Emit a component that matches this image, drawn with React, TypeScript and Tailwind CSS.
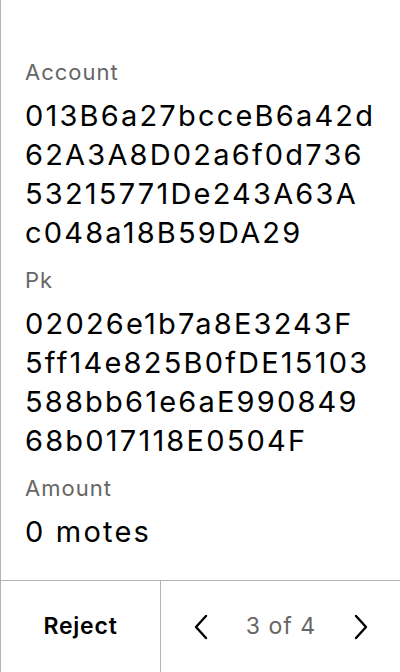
import React from "react";

function Chevron({ dir }: { dir: "left" | "right" }) {
  return (
    <svg width="16" height="26" viewBox="0 0 16 26" fill="none">
      {dir === "left" ? (
        <path d="M13 2 L3 13 L13 24" stroke="#000" strokeWidth="2.4" strokeLinecap="round" strokeLinejoin="round" />
      ) : (
        <path d="M3 2 L13 13 L3 24" stroke="#000" strokeWidth="2.4" strokeLinecap="round" strokeLinejoin="round" />
      )}
    </svg>
  );
}

export default function App() {
  const font = { fontFamily: "Inter, 'Noto Sans', sans-serif" };
  const label = "text-[22px] leading-[24px] tracking-[1px] text-[#666666]";
  const value = "mt-[12px] text-[29px] leading-[39px] tracking-[2.2px] text-black";
  return (
    <div className="h-[672px] w-[400px] flex flex-col bg-white border-l border-[#b3b3b3]" style={font}>
      <div className="flex-1 pt-[60px] px-[24px]">
        <div className={label}>Account</div>
        <div className={value}>
          <div>013B6a27bcceB6a42d</div>
          <div>62A3A8D02a6f0d736</div>
          <div>53215771De243A63A</div>
          <div>c048a18B59DA29</div>
        </div>
        <div className={"mt-[16px] " + label}>Pk</div>
        <div className={value}>
          <div>02026e1b7a8E3243F</div>
          <div>5ff14e825B0fDE15103</div>
          <div>588bb61e6aE990849</div>
          <div>68b017118E0504F</div>
        </div>
        <div className={"mt-[16px] " + label}>Amount</div>
        <div className={value}>0 motes</div>
      </div>
      <div className="h-[92px] flex border-t border-[#b3b3b3]">
        <div className="w-[160px] flex items-center justify-center border-r border-[#b3b3b3] text-[23px] tracking-[0.8px] font-semibold text-black">
          Reject
        </div>
        <div className="flex-1 flex items-center justify-between pl-[32px] pr-[31px]">
          <Chevron dir="left" />
          <span className="text-[23px] tracking-[1px] text-[#666666]">3 of 4</span>
          <Chevron dir="right" />
        </div>
      </div>
    </div>
  );
}
